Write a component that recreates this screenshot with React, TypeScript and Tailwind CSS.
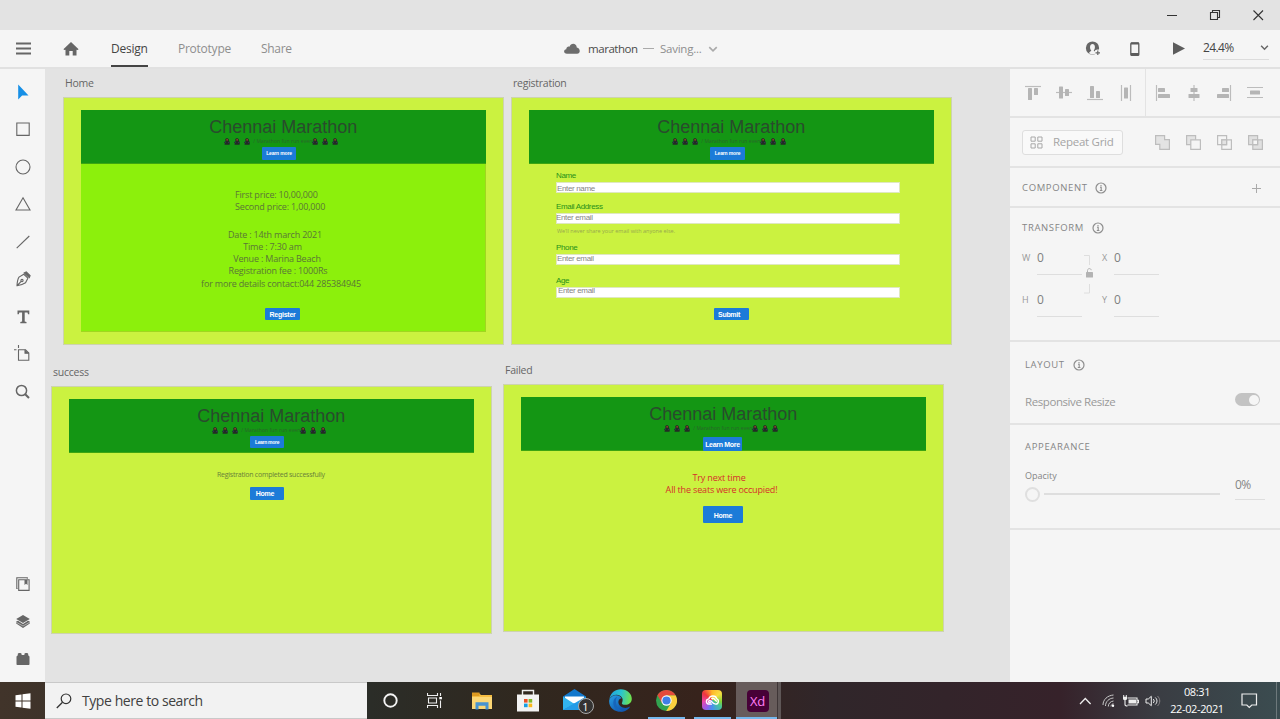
import React from "react";

type Kids = { children?: React.ReactNode };

function Svg({ w, h, box, className = "", children }: Kids & { w: number; h: number; box?: string; className?: string }) {
  return (
    <svg width={w} height={h} viewBox={box ?? `0 0 ${w} ${h}`} className={`block shrink-0 ${className}`} fill="none">
      {children}
    </svg>
  );
}

/* ---------- artboards ---------- */

function Label({ className, children }: Kids & { className: string }) {
  return <span className={`absolute whitespace-nowrap leading-none ${className}`}>{children}</span>;
}

function Button({ className, children }: Kids & { className: string }) {
  return (
    <div
      className={`absolute flex items-center justify-center whitespace-nowrap rounded-[1px] bg-[#1c7bd8] font-['Liberation_Sans',sans-serif] font-bold leading-none text-white ${className}`}
    >
      {children}
    </div>
  );
}

function Runners() {
  return (
    <div className="flex gap-[4px]">
      {[0, 1, 2].map((i) => (
        <Svg key={i} w={6} h={7} box="0 0 6 7">
          <path d="M1.2 1L3 .1l1.700.9.2 1.500L5.900 4.500 5.500 6.800H.5L.8 5.300 0 4.600 1.500 3z" fill="#232b25" />
          <path d="M2.300 1.300h1.700v1.300H2.300z" fill="#a5482c" />
          <path d="M.8 4.200h1.200M4.100 4.600h1.300" stroke="#33406a" strokeWidth=".8" />
        </Svg>
      ))}
    </div>
  );
}

function Header() {
  return (
    <div className="absolute left-[18px] top-[13px] flex h-[54px] w-[404.5px] flex-col items-center border-b border-[#3ca512] bg-[#149614]">
      <div className="mt-[8px] whitespace-nowrap font-['Liberation_Sans',sans-serif] text-[18px] leading-[18px] text-[#294b2c]">
        Chennai Marathon
      </div>
      <div className="mt-[2px] flex h-[7px] w-[118px] items-center">
        <Runners />
        <span className="ml-[3px] w-[59px] whitespace-nowrap text-[5px] leading-none tracking-[0.08px] text-[#2a642b]">
          / Marathon fun run event
        </span>
        <Runners />
      </div>
    </div>
  );
}

function Board({ className, name, children }: Kids & { className: string; name: string }) {
  return (
    <section className={`absolute h-[248px] w-[440.5px] border border-[#cdd3ae] bg-[#cbf240] ${className}`}>
      <div className="absolute -left-px -top-px">
        <Label className="left-[2px] top-[-19px] text-[10.5px] tracking-[-0.25px] text-[#666]">{name}</Label>
        <Header />
        {children}
      </div>
    </section>
  );
}

function Field({ className, label, hint, labelClass, hintClass }: { className: string; label: string; hint: string; labelClass: string; hintClass: string }) {
  return (
    <div className={`absolute left-[45px] h-[11px] w-[344px] border border-[#dfe8c0] bg-white ${className}`}>
      <Label className={`font-['Liberation_Sans',sans-serif] text-[8px] tracking-[-0.35px] text-[#27911a] ${labelClass}`}>{label}</Label>
      <Label className={`font-['Liberation_Sans',sans-serif] text-[8px] tracking-[-0.35px] text-[#858585] ${hintClass}`}>{hint}</Label>
    </div>
  );
}

function Canvas() {
  return (
    <main className="relative min-w-0 flex-1 overflow-hidden bg-[#e3e3e3]">
      <Board className="left-[18px] top-[28px]" name="Home">
        <Button className="left-[199px] top-[50px] h-[13px] w-[34px] text-[5px] tracking-[-0.15px]">Learn more</Button>
        <div className="absolute left-[18px] top-[67px] h-[168px] w-[404.5px] border-b border-r border-[#a0d720] bg-[#8cf00c] text-[9px] tracking-[-0.18px] text-[#5a7638]">
          <Label className="left-[154px] top-[26px]">First price: 10,00,000</Label>
          <Label className="left-[154px] top-[38px]">Second price: 1,00,000</Label>
          <div className="absolute left-[120px] top-[64.5px] flex w-[160px] flex-col items-center whitespace-nowrap leading-[12.25px]">
            <span className="-ml-[12px]">Date : 14th march 2021</span>
            <span className="-ml-[17px]">Time : 7:30 am</span>
            <span className="-ml-[8px]">Venue : Marina Beach</span>
            <span className="-ml-[6px]">Registration fee : 1000Rs</span>
            <span>for more details contact:044 285384945</span>
          </div>
        </div>
        <Button className="left-[202px] top-[211px] h-[12px] w-[35px] text-[7px] tracking-[-0.25px]">Register</Button>
      </Board>

      <Board className="left-[466px] top-[28px]" name="registration">
        <Button className="left-[199px] top-[50px] h-[13px] w-[35px] text-[5px] tracking-[-0.15px]">Learn more</Button>
        <Field className="top-[85px]" label="Name" hint="Enter name" labelClass="-left-px top-[-11px]" hintClass="left-0 top-[2px]" />
        <Field className="top-[116px]" label="Email Address" hint="Enter email" labelClass="-left-px top-[-11px]" hintClass="-left-px top-0" />
        <Label className="left-[46px] top-[132px] text-[5.5px] text-[#98a94f]">We’ll never share your email with anyone else.</Label>
        <Field className="top-[157px]" label="Phone" hint="Enter email" labelClass="-left-px top-[-11px]" hintClass="left-0 top-0" />
        <Field className="top-[190px]" label="Age" hint="Enter email" labelClass="-left-px top-[-11px]" hintClass="left-[1px] top-[-1px]" />
        <Button className="left-[203px] top-[211px] h-[12px] w-[35px] pr-[5px] text-[7px] tracking-[-0.3px]">Submit</Button>
      </Board>

      <Board className="left-[6px] top-[317px]" name="success">
        <Button className="left-[199px] top-[50px] h-[12px] w-[34px] text-[5px] tracking-[-0.3px]">Learn more</Button>
        <Label className="left-[166px] top-[85px] text-[7px] tracking-[-0.24px] text-[#68803a]">Registration completed successfully</Label>
        <Button className="left-[199px] top-[101px] h-[13px] w-[34px] pr-[4px] text-[7px] tracking-[-0.25px]">Home</Button>
      </Board>

      <Board className="left-[458px] top-[315px]" name="Failed">
        <Button className="left-[200px] top-[53px] h-[14px] w-[39px] text-[7px] tracking-[-0.3px]">Learn More</Button>
        <div className="absolute left-[160px] top-[88px] flex w-[117px] flex-col items-center whitespace-nowrap text-[9px] leading-[12px] tracking-[-0.16px] text-[#d62f2b]">
          <span className="-ml-[5px]">Try next time</span>
          <span>All the seats were occupied!</span>
        </div>
        <Button className="left-[200px] top-[122px] h-[17px] w-[40px] pt-[1px] text-[7px] tracking-[-0.25px]">Home</Button>
      </Board>
    </main>
  );
}

/* ---------- window chrome ---------- */

function TitleBar() {
  return (
    <div className="flex h-[30px] shrink-0 items-center justify-end gap-[31px] bg-[#e3e3e3] pr-[16px]">
      <Svg w={12} h={12}><path d="M1 6.5h10" stroke="#333" /></Svg>
      <Svg w={12} h={12}>
        <path d="M1.5 3.5h7v7h-7zM3.5 3.5v-2h7v7h-2" stroke="#333" strokeWidth="1.1" />
      </Svg>
      <Svg w={12} h={12}><path d="M1.500 1.500l9.500 9.500M11 1.500l-9.500 9.500" stroke="#333" strokeWidth="1.100" /></Svg>
    </div>
  );
}

function Chevron({ color, w = 8 }: { color: string; w?: number }) {
  return <Svg w={w} h={w} box="0 0 8 8"><path d="M1 2.500l3 3 3-3" stroke={color} strokeWidth="1.300" /></Svg>;
}

function TopBar() {
  return (
    <header className="flex h-[39px] shrink-0 border-b-2 border-[#e1e1e1] bg-[#f5f5f5] text-[12px] text-[#8e8e8e]">
      <div className="flex w-[564px] items-center pl-[16px]">
        <Svg w={15} h={13}><path d="M0 1.500h15M0 6.500h15M0 11.500h15" stroke="#666" strokeWidth="1.800" /></Svg>
        <Svg w={16} h={14} className="ml-[32px]">
          <path d="M8 0l7.600 7.200-1 .9-1.100-.4V13.600H9.700V9H6.300v4.600H2.500V7.700l-1.100.4-1-.9z" fill="#666" />
        </Svg>
        <div className="ml-[32px] flex h-full w-[37px] items-center border-b-2 border-[#444] pt-[2px] text-[#444]">
          <span className="tracking-[-0.25px]">Design</span>
        </div>
        <span className="ml-[30px] w-[53px] tracking-[-0.25px]">Prototype</span>
        <span className="ml-[30px] tracking-[-0.3px]">Share</span>
      </div>
      <div className="flex w-[521px] items-center">
        <Svg w={16} h={11}>
          <path d="M3 10.700C-.7 10.700-.8 6.700 2.300 6.200 2.200 3.800 4.400 3 5.500 3.700 6.600-.3 12.400-.4 12.800 4.400c3.900.8 3.900 6.300.2 6.300z" fill="#6d6d6d" />
        </Svg>
        <span className="ml-[8px] w-[48px] text-[11.5px] tracking-[-0.45px] text-[#4b4b4b]">marathon</span>
        <span className="ml-[7px] h-px w-[11px] bg-[#aaa]" />
        <span className="ml-[6px] w-[41px] text-[11.5px] tracking-[-0.25px]">Saving...</span>
        <span className="ml-[7px]"><Chevron color="#aaa" w={10} /></span>
      </div>
      <div className="flex flex-1 items-center">
        <Svg w={17} h={16}>
          <circle cx="7.500" cy="7" r="6.600" fill="#666" />
          <path d="M4 12.200c.2-1.600 2.400-1.600 2.300-2.600C4.400 7.600 4.600 3 7.500 3s3.100 4.600 1.200 6.600c0 1 2.200 1 2.300 2.600-2 1.500-5 1.500-7 0z" fill="#f5f5f5" />
          <circle cx="12.800" cy="11.800" r="3.400" fill="#f5f5f5" />
          <path d="M12.800 9.500V14M10.500 11.800H15" stroke="#666" strokeWidth="1.200" />
        </Svg>
        <Svg w={10} h={14} className="ml-[28px]">
          <rect x=".8" y=".8" width="8" height="12.600" rx="1" stroke="#5c5c5c" strokeWidth="1.300" />
          <path d="M1 1.500h8M1 12h8" stroke="#5c5c5c" strokeWidth="2" />
        </Svg>
        <Svg w={12} h={13} className="ml-[33px]"><path d="M0 .3v12.400L12 6.500z" fill="#5c5c5c" /></Svg>
        <div className="ml-[18px] flex h-[22px] w-[66px] items-center justify-between border-b border-[#dcdcdc] pb-[1px] text-[#444]">
          <span className="text-[12px] tracking-[-0.6px]">24.4%</span>
          <Chevron color="#666" w={9} />
        </div>
      </div>
    </header>
  );
}

function Tool({ children, color = "#666" }: Kids & { color?: string }) {
  return (
    <div className="flex h-[37.500px] items-center justify-center">
      <svg width="18" height="18" viewBox="0 0 18 18" fill="none" stroke={color} strokeWidth="1.100">{children}</svg>
    </div>
  );
}

function ToolRail() {
  return (
    <nav className="flex w-[45px] shrink-0 flex-col justify-between bg-[#f5f5f5] pb-[4px] pt-[4px]">
      <div>
        <Tool color="none"><path d="M4.200 1.500v15l3.900-4h6.400z" fill="#168fe6" /></Tool>
        <Tool><path d="M2.800 3h12.400v12.400H2.800z" /></Tool>
        <Tool><circle cx="9" cy="9" r="7" /></Tool>
        <Tool><path d="M9 2.800L16 15H2z" /></Tool>
        <Tool><path d="M2.700 15.200L15.300 3" /></Tool>
        <Tool>
          <path d="M3 15.700c.2-3.600.5-6.500 2-8.600l4.800-2.800 4.100 3.900-2.400 4.600C9.300 14.400 6.400 15.200 3 15.700zM3.200 15.500l4-4.200" />
          <circle cx="8" cy="10.500" r="1.100" />
          <path d="M10.300 3l5 4.600.8-2L12.300 2z" fill="#666" />
        </Tool>
        <Tool color="none">
          <path d="M3.500 2.500h11.800v3.800H14l-.5-1.900h-2.800v9l1.800.5v1.300H6.300v-1.300l1.800-.5v-9H5.300l-.5 1.900H3.500z" fill="#666" />
        </Tool>
        <Tool>
          <path d="M4.500 4.700h7l3.300 3.300v7.200H4.500zM4.500 0v3M0 4.700h2.500" />
          <path d="M11 4.700v3.600h3.800" fill="#666" />
        </Tool>
        <Tool><circle cx="7.500" cy="7.500" r="5.100" strokeWidth="1.500" /><path d="M11.200 11.200l3.800 3.800" strokeWidth="2" /></Tool>
      </div>
      <div>
        <Tool>
          <path d="M4.700 4.800h10.400v10.600H4.700zM3.600 13.500h-.8V2.800h10.500v1" />
          <path d="M10.500 5v5l1.500-1.300L13.500 10V5z" fill="#666" stroke="none" />
        </Tool>
        <Tool color="none">
          <path d="M9 2l6.800 4L9 10 2.200 6z" fill="#666" />
          <path d="M2.200 8.500L4 7.700l5 3.200 5-3.200 1.800.8v2L9 15l-6.800-4.500z" fill="#666" />
          <path d="M2.200 9.200L9 13l6.800-3.800" stroke="#f5f5f5" strokeWidth=".5" />
        </Tool>
        <Tool color="none">
          <path d="M2.500 6.500l1.300-1.300V4c0-1.300 3.800-1.300 3.800 0v1h2.800V4c0-1.300 3.800-1.300 3.800 0v1.200l1.300 1.300v7.400c0 .6-.4 1-1 1H3.500c-.6 0-1-.4-1-1z" fill="#666" />
        </Tool>
      </div>
    </nav>
  );
}

/* ---------- inspector ---------- */

function Info() {
  return (
    <Svg w={12} h={12}>
      <circle cx="6" cy="6" r="5" stroke="#8e8e8e" strokeWidth="1.200" />
      <path d="M5 5.300h1.200v3M4.800 8.500h2.600M6 2.900v1.300" stroke="#8e8e8e" strokeWidth="1.100" />
    </Svg>
  );
}

function Heading({ children }: Kids) {
  return <h2 className="text-[9.5px] leading-none tracking-[0.65px] text-[#858585]">{children}</h2>;
}

function Align({ lines, bars }: { lines: string; bars: [number, number, number, number][] }) {
  return (
    <Svg w={16} h={16}>
      <path d={lines} stroke="#bcbcbc" strokeWidth="1.200" />
      {bars.map(([x, y, w, h], i) => <rect key={i} x={x} y={y} width={w} height={h} rx=".6" fill="#b5b5b5" />)}
    </Svg>
  );
}

function Merge({ mode }: { mode: "add" | "subtract" | "intersect" | "exclude" }) {
  return (
    <Svg w={15} h={15}>
      <g stroke="#bdbdbd" strokeWidth="1.200">
        {mode === "add" && <path d="M.6.6h9v4h4.800v9.800H4.800v-5H.6z" fill="#e3e3e3" />}
        {mode === "subtract" && <><path d="M.6.6h9v9h-9z" fill="#e3e3e3" /><path d="M4.800 4.800h9.600v9.600H4.800z" fill="#f5f5f5" /></>}
        {mode === "intersect" && <><path d="M.6.6h9v9h-9zM4.800 4.800h9.600v9.600H4.800z" /><path d="M4.800 4.800h4.800v4.800H4.800z" fill="#e3e3e3" /></>}
        {mode === "exclude" && <><path d="M.6.6h9v9h-9zM4.800 4.800h9.600v9.600H4.800z" fill="#e0e0e0" /><path d="M4.800 4.800h4.800v4.800H4.800z" fill="#f5f5f5" /></>}
      </g>
    </Svg>
  );
}

function Value({ name, tight = false }: { name: string; tight?: boolean }) {
  return (
    <div className="flex h-[25px] items-start">
      <span className={`pt-[2px] text-[9px] leading-[12px] text-[#999] ${tight ? "w-[12px]" : "w-[15px]"}`}>{name}</span>
      <span className="h-[25px] w-[45px] border-b border-[#dedede] text-[12px] leading-[15px] text-[#808080]">0</span>
    </div>
  );
}

function Inspector() {
  return (
    <aside className="w-[270px] shrink-0 bg-[#f5f5f5]">
      <div className="flex h-[49px] border-b-2 border-[#e3e3e3]">
        <div className="flex w-[136px] items-center justify-between border-r border-[#e3e3e3] pl-[15px] pr-[11px]">
          <Align lines="M0 1.500h16" bars={[[3, 3, 4, 12], [9, 3, 4, 7]]} />
          <Align lines="M0 7.500h16" bars={[[3, 1.5, 4, 12], [9, 4, 4, 7]]} />
          <Align lines="M0 14.500h16" bars={[[3, 1, 4, 12], [9, 6, 4, 7]]} />
          <Align lines="M3.500 0v16M12.500 0v16" bars={[[6, 2.5, 4, 11]]} />
        </div>
        <div className="flex flex-1 items-center justify-between pl-[9px] pr-[17px]">
          <Align lines="M1.500 0v16" bars={[[3, 3, 7, 4], [3, 9, 12, 4]]} />
          <Align lines="M8 0v16" bars={[[4.5, 3, 7, 4], [2.5, 9, 11, 4]]} />
          <Align lines="M14.500 0v16" bars={[[6, 3, 7, 4], [1, 9, 12, 4]]} />
          <Align lines="M0 2.500h16M0 12.500h16" bars={[[3, 5.5, 10, 4]]} />
        </div>
      </div>
      <div className="flex h-[50px] items-center border-b-2 border-[#e3e3e3] pl-[12px]">
        <div className="flex h-[25px] w-[101px] items-center rounded-[3px] border border-[#dedede] bg-[#f9f9f9] pl-[7px] text-[11.5px] text-[#a5a5a5]">
          <Svg w={13} h={13}>
            <path d="M1 1h4.200v4.200H1zM7.800 1H12v4.200H7.800zM1 7.800h4.200V12H1zM7.800 7.800H12V12H7.800z" stroke="#a8a8a8" />
          </Svg>
          <span className="ml-[10px] tracking-[-0.28px]">Repeat Grid</span>
        </div>
        <div className="ml-[32px] flex gap-[16px]">
          <Merge mode="add" /><Merge mode="subtract" /><Merge mode="intersect" /><Merge mode="exclude" />
        </div>
      </div>
      <div className="flex h-[40px] items-center justify-between border-b-2 border-[#e3e3e3] pl-[12px] pr-[19px] pt-[2px]">
        <div className="flex items-center gap-[7px]"><Heading>COMPONENT</Heading><Info /></div>
        <Svg w={9} h={9}><path d="M4.500 0v9M0 4.500h9" stroke="#aaa" /></Svg>
      </div>
      <div className="h-[134px] border-b-2 border-[#e3e3e3] pl-[12px] pt-[14px]">
        <div className="flex items-center gap-[8px]"><Heading>TRANSFORM</Heading><Info /></div>
        <div className="mt-[16px] flex">
          <div className="flex flex-col gap-[17px]"><Value name="W" /><Value name="H" /></div>
          <Svg w={10} h={42} className="ml-[1px] mt-[3px]">
            <path d="M1 2.500h5.500V12M6.500 31v9H1" stroke="#dedede" />
            <rect x="3" y="19" width="7" height="5.500" rx=".6" fill="#b3b3b3" />
            <path d="M4.500 19v-1.500c0-2.500 3.700-2.500 3.700-.3" stroke="#b3b3b3" />
          </Svg>
          <div className="ml-[9px] flex flex-col gap-[17px]"><Value name="X" tight /><Value name="Y" tight /></div>
        </div>
      </div>
      <div className="h-[83px] border-b-2 border-[#e3e3e3] pl-[15px] pr-[20px] pt-[17px]">
        <div className="flex items-center gap-[8px]"><Heading>LAYOUT</Heading><Info /></div>
        <div className="mt-[20px] flex items-center justify-between text-[11.5px] leading-[21px] text-[#999]">
          <span className="tracking-[-0.42px]">Responsive Resize</span>
          <span className="mb-[4px] flex h-[13px] w-[25px] items-center justify-end rounded-full bg-[#c3c3c3] pr-[1px]">
            <span className="h-[10px] w-[10px] rounded-full bg-[#f5f5f5]" />
          </span>
        </div>
      </div>
      <div className="flex h-[105px] justify-between border-b-2 border-[#e3e3e3] pl-[15px] pr-[15px] pt-[17px]">
        <div>
          <Heading>APPEARANCE</Heading>
          <div className="mt-[18px] text-[9px] leading-[12px] text-[#858585]">Opacity</div>
          <div className="mt-[5px] flex items-center">
            <span className="h-[15px] w-[15px] rounded-full border-2 border-[#dfdfdf]" />
            <span className="ml-[4px] h-[2px] w-[176px] bg-[#dedede]" />
          </div>
        </div>
        <div className="mt-[35px] h-[23px] w-[30px] border-b border-[#dedede] text-[12px] leading-[15px] tracking-[-0.7px] text-[#858585]">0%</div>
      </div>
    </aside>
  );
}

/* ---------- taskbar ---------- */

function TaskItem({ children, className = "" }: Kids & { className?: string }) {
  return <div className={`flex h-full w-[46px] shrink-0 items-center justify-center ${className}`}>{children}</div>;
}

function Taskbar() {
  return (
    <footer className="flex h-[37px] shrink-0 bg-[linear-gradient(90deg,#41342a_0px,#2b2d28_370px,#30281f_520px,#37231c_700px,#30262a_830px,#36222a_1060px,#3a3d43_1160px,#3b4c50_1280px)]">
      <div className="flex w-[45px] items-center justify-center">
        <Svg w={16} h={16}>
          <path d="M.5 2.300L6.500 1.500v6H.5zM7.500 1.300L15.500.3v7.200h-8zM.5 8.500h6v6L.5 13.700zM7.500 8.500h8v7.200l-8-1z" fill="#fff" />
        </Svg>
      </div>
      <div className="flex w-[322px] items-center border-y border-[#c9c9c9] bg-[#f2f2f2] pl-[11px] text-[14px] text-[#404040]">
        <Svg w={16} h={16}>
          <circle cx="10" cy="5.800" r="4.800" stroke="#333" strokeWidth="1.200" />
          <path d="M6.500 9.200L.8 15" stroke="#333" strokeWidth="1.300" />
        </Svg>
        <span className="ml-[10px] tracking-[-0.43px]">Type here to search</span>
      </div>
      <TaskItem>
        <Svg w={15} h={15}><circle cx="7.500" cy="7.500" r="6.200" stroke="#f4f4f4" strokeWidth="1.900" /></Svg>
      </TaskItem>
      <TaskItem className="pr-[3px]">
        <Svg w={16} h={15}>
          <path d="M.5 0v2.500h10V0M1.500 5h8v5h-8zM.5 15v-2.500h10V15M13.500 0v3M13.500 7.500V15" stroke="#eee" strokeWidth="1.100" />
          <path d="M12.300 4h2.600v2.300h-2.600z" fill="#fff" />
        </Svg>
      </TaskItem>
      <TaskItem>
        <Svg w={20} h={18}>
          <path d="M0 1.500h7.500l1.500 1.500h11v14H0z" fill="#f5bd42" />
          <path d="M0 .5h7.500V4H0z" fill="#dd9a20" />
          <path d="M0 5h20v12H0z" fill="#fbd775" />
          <path d="M3.500 17.500V10.200h13v7.300H13.500v-3.800H6.500v3.800z" fill="#4794d1" />
        </Svg>
      </TaskItem>
      <TaskItem>
        <Svg w={22} h={23}>
          <path d="M5.500 7V1.500h11V7" stroke="#eee" strokeWidth="1.400" />
          <path d="M0 5.500h22v17H0z" fill="#f3f3f3" />
          <path d="M7 10h3.600v3.600H7z" fill="#eb5027" /><path d="M11.600 10h3.600v3.600h-3.600z" fill="#7fb92b" />
          <path d="M7 14.600h3.600v3.600H7z" fill="#179fe4" /><path d="M11.600 14.600h3.600v3.600h-3.600z" fill="#fbb81a" />
        </Svg>
      </TaskItem>
      <TaskItem className="pl-[8px]">
        <div className="relative pt-[3px]">
          <Svg w={31} h={26}>
            <path d="M0 7.500L11.500 0 23 7.500V21H0z" fill="#1378cc" />
            <path d="M2 7.500h19v7H2z" fill="#fff" />
            <path d="M0 7.500L11.500 15 0 21z" fill="#32b4f0" />
            <path d="M23 7.500V21H0z" fill="#239ce7" />
          </Svg>
          <div className="absolute left-[15px] top-[12px] flex h-[16px] w-[16px] items-center justify-center rounded-full border border-[#aaa] bg-[#343332] text-[11px] leading-none text-white">1</div>
        </div>
      </TaskItem>
      <TaskItem>
        <Svg w={23} h={23} box="0 0 24 24">
          <defs>
            <linearGradient id="edgeTop" x1="1" y1="6" x2="23" y2="10" gradientUnits="userSpaceOnUse"><stop stopColor="#21a5de" /><stop offset=".5" stopColor="#2ac5cf" /><stop offset="1" stopColor="#6fe24d" /></linearGradient>
            <linearGradient id="edgeLow" x1="2" y1="10" x2="12" y2="23" gradientUnits="userSpaceOnUse"><stop stopColor="#2393dd" /><stop offset="1" stopColor="#1158b0" /></linearGradient>
          </defs>
          <path d="M.4 11C1.500 3.700 6.700.2 12.300.3 19 .4 24 5.200 23.800 10.500c-.1 4-3.300 6-6.700 6-2.800 0-4.400-1-3.400-2.500C15.600 10 12.600 6 8 6 4.300 6 1.500 8 .4 11z" fill="url(#edgeTop)" />
          <path d="M.2 12C1 8.500 4 6.500 7.500 6.500c3 0 5 1.500 5.700 3.200-4 .7-4.600 5.500-1.200 8.300 3 2.400 7 2.300 10 .3-1.600 3.300-5.400 5.500-9.700 5.500C5.500 23.700-.4 18.700.2 12z" fill="url(#edgeLow)" />
          <path d="M8.500 8.200C5.500 13 7.500 21 14.500 23.500 9 23 4.500 20 4.500 14.500c0-3 1.500-5.200 4-6.300z" fill="#1765ba" />
        </Svg>
      </TaskItem>
      <TaskItem>
        <div className="flex h-full w-[37px] flex-col items-center justify-between pt-[8px]">
          <Svg w={21} h={21} box="0 0 24 24">
            <circle cx="12" cy="12" r="12" fill="#32a350" />
            <path d="M12 6h10.400A12 12 0 0111.700 24L17 15z" fill="#fbd03f" />
            <path d="M1.600 6A12 12 0 0122.400 6H12L7 15z" fill="#e44b3c" />
            <circle cx="12" cy="12" r="5.900" fill="#fff" /><circle cx="12" cy="12" r="4.700" fill="#407fe8" />
          </Svg>
          <span className="h-[2px] w-full bg-[#75b8ed]" />
        </div>
      </TaskItem>
      <TaskItem>
        <div className="flex h-full w-[37px] flex-col items-center justify-between pt-[8px]">
          <div className="flex h-[20px] w-[20px] items-center justify-center rounded-[4px] bg-[conic-gradient(from_0deg,#ffb628,#fadd40_14%,#7ed338_28%,#46c3a0_36%,#4690ef_50%,#9a5bea_60%,#e848ad_72%,#f0353e_86%,#ffb628)]">
            <Svg w={15} h={11} box="0 0 16 12">
              <path d="M7.500 10H4.500C.5 10 .3 4.800 4 4.300 5-.2 12 .2 12.400 4c3.300 1.300 2.300 6-1 6-2 0-3.400-1.500-4.800-3.100-1.200-1.300-2.800-.8-2.800.4 0 1 1.400 1.300 2.400.7M6.800 4.300c1.500-1.600 3.300-.2 4 1 .6 1 2 1 1.500 2" stroke="#fff" strokeWidth="1.500" />
            </Svg>
          </div>
          <span className="h-[2px] w-full bg-[#75b8ed]" />
        </div>
      </TaskItem>
      <div className="ml-[1px] flex h-full w-[41px] flex-col items-center justify-between bg-[#675c5b] pt-[8px] pl-[2px]">
        <div className="flex h-[22px] w-[22px] items-center justify-center rounded-[4px] bg-[#470137] text-[13px] leading-none tracking-[-0.2px] text-[#ff7cf6]">Xd</div>
        <span className="-ml-[2px] h-[2px] w-[41px] bg-[#75b8ed]" />
      </div>
      <div className="h-full w-[4px] border-l border-[#3f3637] bg-[#5f5757]" />
      <div className="ml-auto flex items-center">
        <Svg w={13} h={8}><path d="M1 7l5.300-5.500L11.600 7" stroke="#eee" strokeWidth="1.300" /></Svg>
        <Svg w={13} h={13} className="ml-[10px]">
          <path d="M1 11C1 5.500 5.500 1.500 11.500 1M3.500 12C3.500 7.500 7 4.300 11.500 4M6.300 12.500c0-3 2.200-5.200 5.200-5.500M9 12.500c0-1.500 1-2.500 2.500-2.700" stroke="#c8c8c8" />
          <circle cx="11" cy="11.800" r="1.200" fill="#fff" />
        </Svg>
        <Svg w={17} h={12} className="ml-[7px]">
          <path d="M5.500 3h9.500v7H5.500M3 6v3.500c0 1 1 1.500 2.500 1.500M15 5.300h1.500v2.500H15" stroke="#eee" strokeWidth="1.100" />
          <path d="M6.500 4.500H14v4H6.500zM1 1.800h4v2.500L3 6 1 4.300z" fill="#eee" /><path d="M1.700 0v2M4.300 0v2" stroke="#eee" />
        </Svg>
        <Svg w={17} h={12} className="ml-[6px]">
          <path d="M1 4h2.300l3-2.700v9.400l-3-2.700H1z" stroke="#eee" />
          <path d="M8.200 4c1.300 1.200 1.300 2.800 0 4M10.300 2.500c2.200 2 2.200 5 0 7" stroke="#eee" /><path d="M12.500 1c3 3 3 7 0 10" stroke="#8a8588" />
        </Svg>
        <div className="ml-[6px] w-[58px] pb-[2px] text-center text-[11px] leading-[17px] tracking-[-0.38px] text-white">
          <div>08:31</div>
          <div>22-02-2021</div>
        </div>
        <Svg w={17} h={16} className="ml-[15px]"><path d="M1 1h14.500v11h-4.700L8.300 14.500 5.800 12H1z" stroke="#eee" strokeWidth="1.200" /></Svg>
        <div className="ml-[18px] mr-[3px] h-[37px] w-px bg-[#6d787b]" />
      </div>
    </footer>
  );
}

export default function App() {
  return (
    <div className="flex h-[719px] w-[1280px] flex-col overflow-hidden font-['Open_Sans','Noto_Sans',sans-serif]">
      <TitleBar />
      <TopBar />
      <div className="flex min-h-0 flex-1">
        <ToolRail />
        <Canvas />
        <Inspector />
      </div>
      <Taskbar />
    </div>
  );
}
